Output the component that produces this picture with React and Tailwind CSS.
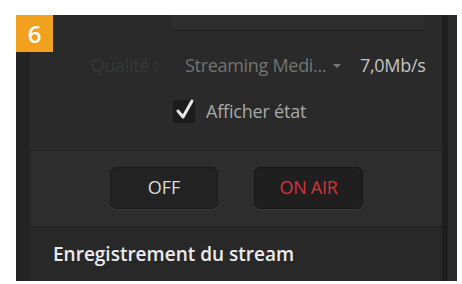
export default function App() {
  return (
    <div className="w-[462px] h-[284px] bg-white pl-[16px] pt-[15px]" style={{ fontFamily: '"Open Sans", "Noto Sans", sans-serif' }}>
      <div className="relative w-[441px] h-[266px] bg-[#262626] flex">
        {/* badge */}
        <div className="absolute left-0 top-0 w-[37px] h-[37px] bg-[#f2a11f] flex items-center justify-center text-white text-[24px] font-semibold leading-none z-10">6</div>
        <div className="w-[14px] bg-[#242424]" />
        <div className="flex-1 flex flex-col">
          {/* settings section */}
          <div className="h-[135px] bg-[#2a2a2a] flex flex-col">
            <div className="h-[16px] flex">
              <div className="w-[142px]" />
              <div className="w-[252px] bg-[#2e2e2e] border-b border-[#1f1f1f]" />
            </div>
            <div className="h-[38px] mt-[15px] flex items-center text-[18px] tracking-[-0.3px]">
              <div className="w-[142px] flex justify-end pr-[14px] text-[#383838]">Qualité :</div>
              <div className="w-[188px] h-[36px] flex items-center pl-[13px] text-[#737373]">
                <span>Streaming Medi...</span>
                <svg width="10" height="6" viewBox="0 0 10 6" className="ml-[6px] mt-[2px]"><path d="M1 1 L5 5 L9 1 Z" fill="#777" /></svg>
              </div>
              <div className="text-[#c4c4c4]">7,0Mb/s</div>
            </div>
            <div className="flex items-center mt-[14px] ml-[143px]">
              <div className="relative w-[22px] h-[23px] bg-[#1c1c1c] rounded-[3px]">
                <svg width="22" height="24" viewBox="0 0 22 24" className="absolute left-[1px] -top-[3px]">
                  <path d="M4 14 L9 20 L18 4" fill="none" stroke="#e8e8e8" strokeWidth="3" strokeLinecap="round" strokeLinejoin="round" />
                </svg>
              </div>
              <span className="ml-[11px] text-[18px] tracking-[-0.2px] text-[#a8a8a8]">Afficher état</span>
            </div>
          </div>
          {/* button section */}
          <div className="h-[77px] bg-[#2d2d2d] border-t border-[#222] border-b border-b-[#1f1f1f] flex items-center pl-[80px] gap-[36px]">
            <div className="w-[108px] h-[42px] rounded-[6px] bg-[#232323] border border-[#1a1a1a] shadow-[0_1px_0_#3a3a3a] flex items-center justify-center text-[18px] font-medium text-[#dcdcdc] mt-[-2px]">OFF</div>
            <div className="w-[109px] h-[42px] rounded-[6px] bg-[#1f1f1f] border border-[#171717] shadow-[0_1px_0_#3a3a3a] flex items-center justify-center text-[18px] font-medium text-[#d9313b] mt-[-2px] tracking-[-0.3px]">ON AIR</div>
          </div>
          <div className="flex-1" />
        </div>
        <div className="w-[6px] bg-[#1f1f1f]" />
        <div className="w-[9px] bg-[#2b2b2b]" />
        {/* bottom header */}
        <div className="absolute left-[14px] bottom-0 h-[53px] w-[412px] bg-[#282828] flex items-center pl-[23px] text-[19px] font-semibold text-[#ececec]">Enregistrement du stream</div>
      </div>
    </div>
  );
}
